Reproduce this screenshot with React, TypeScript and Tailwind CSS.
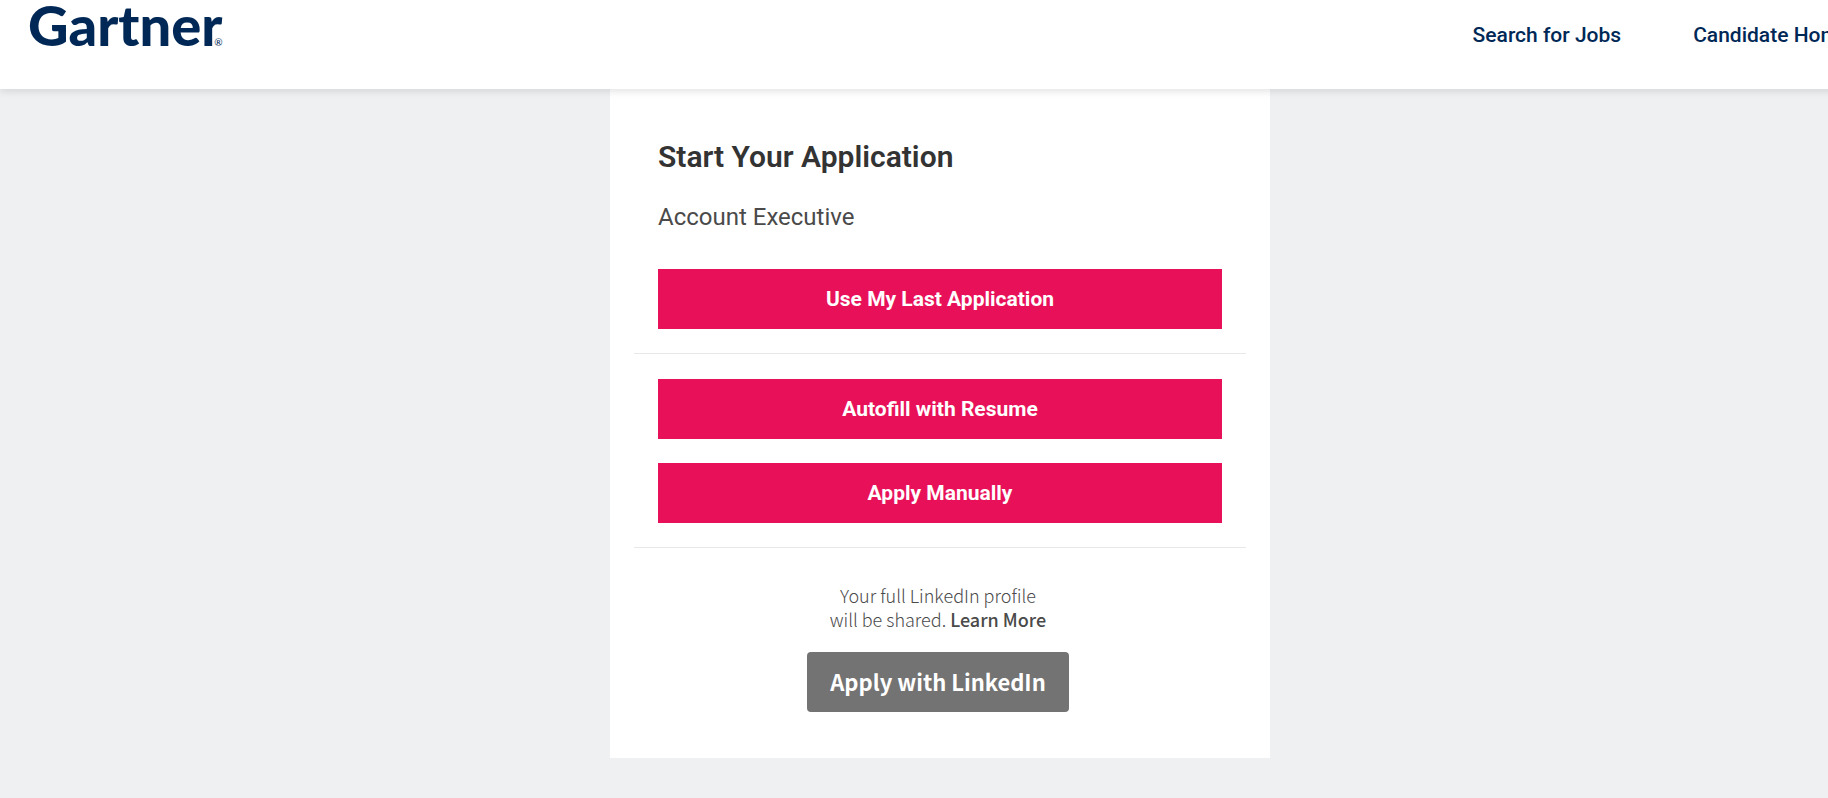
import React from 'react';

interface ApplyButtonProps {
    label: string;
}

const ApplyButton: React.FC<ApplyButtonProps> = ({ label }) => (
    <button
        type="button"
        className="block h-15 w-full cursor-pointer bg-[#e81159] pt-0.5 text-[21px] font-bold text-white hover:bg-[#c90d4c]"
    >
        {label}
    </button>
);

const Header: React.FC = () => (
    <header className="relative flex h-[89px] items-start justify-between bg-white pl-7 shadow-[0_2px_8px_rgba(0,0,0,0.12)]">
        <a
            href="#home"
            aria-label="Gartner"
            className="flex items-baseline font-['Lato',sans-serif] text-[56px] leading-[50px] font-black text-[#002856]"
        >
            Gartner
            <span className="-ml-2 text-[10px] leading-none font-normal">®</span>
        </a>
        <nav className="flex gap-18 pt-5 pr-[30px] text-[21px] leading-[30px] font-medium text-[#002856]">
            <a href="#jobs">Search for Jobs</a>
            <a href="#candidate">Candidate Home</a>
        </nav>
    </header>
);

const LinkedInApply: React.FC = () => (
    <div className="flex flex-col items-center pt-[35px] pr-1 font-['Noto_Sans_CJK_SC',sans-serif]">
        <p className="text-center text-[18px] leading-6 font-light text-[#4a4a4a]">
            Your full LinkedIn profile
            <br />
            will be shared.{' '}
            <a href="#learn-more" className="font-medium">
                Learn More
            </a>
        </p>
        <button
            type="button"
            className="mt-[21px] h-15 cursor-pointer rounded-sm bg-[#737373] px-[23px] pb-0.5 text-[22px] font-bold text-white"
        >
            Apply with LinkedIn
        </button>
    </div>
);

export default function App() {
    return (
        <div className="overflow-x-hidden bg-[#eff0f2]">
            <div className="flex min-h-screen min-w-[1880px] flex-col font-['Roboto',sans-serif]">
                <Header />
                <main className="mx-auto mb-10 w-full max-w-[660px] bg-white px-6 pt-12 pb-[46px]">
                    <div className="px-6">
                        <h1 className="text-[30px] leading-10 font-semibold text-[#333333]">Start Your Application</h1>
                        <h2 className="mt-[22px] mb-[34px] text-[24px] leading-9 text-[#4a4a4a]">Account Executive</h2>
                        <ApplyButton label="Use My Last Application" />
                    </div>
                    <div className="mt-6 space-y-6 border-y border-[#e8e8e8] px-6 pt-[25px] pb-6">
                        <ApplyButton label="Autofill with Resume" />
                        <ApplyButton label="Apply Manually" />
                    </div>
                    <LinkedInApply />
                </main>
            </div>
        </div>
    );
}
